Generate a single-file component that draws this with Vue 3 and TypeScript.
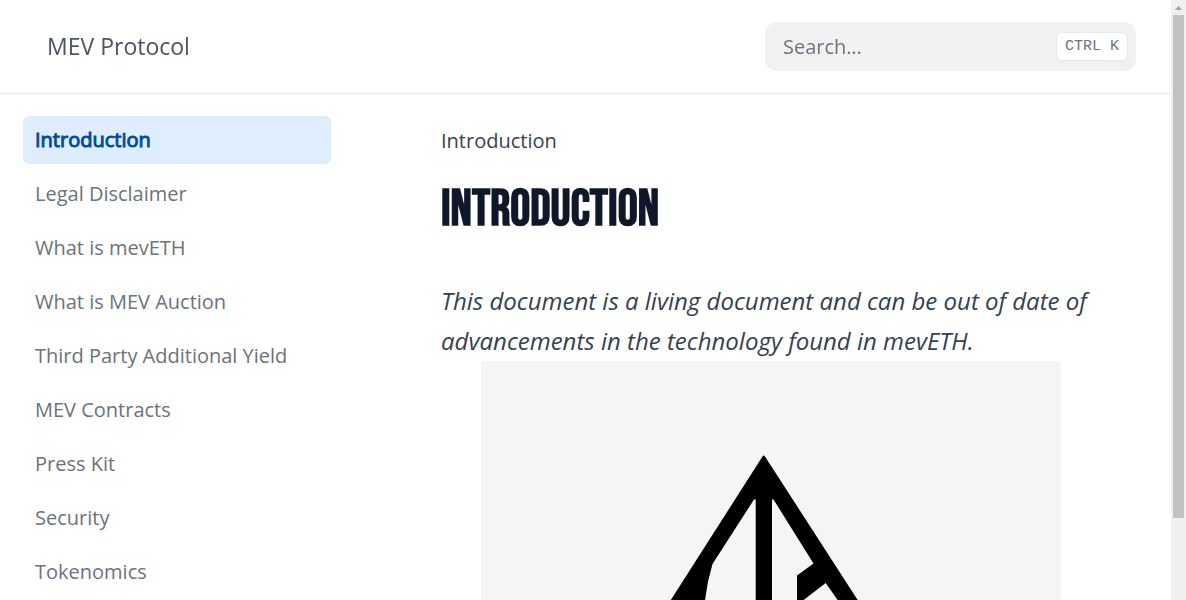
<script setup lang="ts">
import { ref } from 'vue'

interface NavItem {
  label: string
  href: string
}

const query = ref('')
const active = ref('Introduction')

const items: NavItem[] = [
  { label: 'Introduction', href: '#introduction' },
  { label: 'Legal Disclaimer', href: '#legal-disclaimer' },
  { label: 'What is mevETH', href: '#what-is-meveth' },
  { label: 'What is MEV Auction', href: '#what-is-mev-auction' },
  { label: 'Third Party Additional Yield', href: '#third-party' },
  { label: 'MEV Contracts', href: '#mev-contracts' },
  { label: 'Press Kit', href: '#press-kit' },
  { label: 'Security', href: '#security' },
  { label: 'Tokenomics', href: '#tokenomics' },
]
</script>

<template>
  <div class="shell">
    <div class="page">
      <header class="topbar">
        <a class="brand" href="#">MEV Protocol</a>
        <div class="search">
          <input v-model="query" type="search" placeholder="Search…" aria-label="Search" />
          <kbd>CTRL K</kbd>
        </div>
      </header>

      <div class="body">
        <nav class="sidebar" aria-label="Documentation">
          <ul>
            <li v-for="item in items" :key="item.label">
              <a
                :href="item.href"
                :class="{ active: item.label === active }"
                @click="active = item.label"
              >{{ item.label }}</a>
            </li>
          </ul>
        </nav>

        <main class="content">
          <div class="crumb">Introduction</div>
          <h1>INTRODUCTION</h1>
          <p><em>This document is a living document and can be out of date of advancements in the technology found in mevETH.</em></p>
          <figure>
            <svg viewBox="0 0 580 580" role="img" aria-label="MEV Protocol logo">
              <rect width="580" height="580" fill="#f5f5f5" />
              <path
                fill="#000"
                fill-rule="evenodd"
                d="M281.500 95.500Q282.700 93.500 284 95.500L377 239.500H357L344.700 222L322 239.500H316V214.500L332.500 202.500L292.500 138.500H291V239.500H274.700V138.500H273L231.500 203Q226 221 224 239.500H189.500Z"
              />
            </svg>
          </figure>
        </main>
      </div>
    </div>

    <div class="scrollbar" aria-hidden="true">
      <svg viewBox="0 0 15 15"><path d="M4 10 7.500 6 11 10Z" fill="#a3a3a3" /></svg>
      <div class="track"><div class="thumb"></div></div>
    </div>
  </div>
</template>

<style>
body {
  margin: 0;
  background: #fff;
}
</style>

<style scoped>
.shell {
  display: flex;
  height: 100vh;
  overflow: hidden;
  font-family: "Open Sans", "Noto Sans", sans-serif;
  font-size: 20px;
  color: #334155;
}

.page {
  flex: 1;
  min-width: 0;
  overflow-y: auto;
  scrollbar-width: none;
}

.topbar {
  position: sticky;
  top: 0;
  display: flex;
  align-items: center;
  justify-content: space-between;
  height: 93px;
  padding: 0 35px 0 47px;
  background: #fff;
  box-shadow: 0 1px 0 #e8e8e8, 0 2px 4px rgba(0, 0, 0, 0.03);
}

.brand {
  padding-bottom: 2px;
  color: #4b5563;
  font-size: 23px;
  line-height: 30px;
  text-decoration: none;
}

.search {
  display: flex;
  align-items: center;
  box-sizing: border-box;
  width: 371px;
  height: 49px;
  padding: 0 8px 0 18px;
  border-radius: 12px;
  background: #f1f1f1;
}

.search input {
  flex: 1;
  min-width: 0;
  padding: 0;
  border: 0;
  outline: 0;
  background: none;
  color: #374151;
  font: inherit;
}

.search input::placeholder {
  color: #6b7280;
  opacity: 1;
}

.search kbd {
  box-sizing: border-box;
  height: 29px;
  padding: 0 8px;
  border: 1px solid #e5e7eb;
  border-radius: 6px;
  background: #fff;
  color: #6b7280;
  font: 15px/27px "Liberation Mono", monospace;
}

.body {
  display: flex;
}

.sidebar {
  flex: none;
  width: 308px;
  padding: 23px;
}

.sidebar ul {
  display: grid;
  gap: 6px;
  margin: 0;
  padding: 0;
  list-style: none;
}

.sidebar a {
  display: block;
  padding: 10px 12px;
  border-radius: 6px;
  color: #6b7280;
  line-height: 28px;
  text-decoration: none;
}

.sidebar a.active {
  background: #deeeff;
  color: #004ca3;
  -webkit-text-stroke: 1px #004ca3;
}

.content {
  flex: 1;
  min-width: 0;
  padding: 34px 47px 0 87px;
}

.crumb {
  line-height: 28px;
  color: #374151;
}

h1 {
  margin: 25px 0 0;
  color: #0f172a;
  font: bold 50px/60px "Bebas Neue", "Liberation Sans Narrow", sans-serif;
}

p {
  margin: 41px 0 0;
  font-size: 24px;
  line-height: 40px;
}

figure {
  margin: 0 40px;
}

figure svg {
  display: block;
  width: 100%;
  max-width: 580px;
}

.scrollbar {
  display: flex;
  flex: none;
  flex-direction: column;
  width: 15px;
  background: #f0f0f0;
}

.scrollbar svg {
  flex: none;
  width: 15px;
  height: 15px;
}

.track {
  flex: 1;
  padding: 0 2px;
}

.thumb {
  height: 86%;
  background: #c1c1c1;
}
</style>
